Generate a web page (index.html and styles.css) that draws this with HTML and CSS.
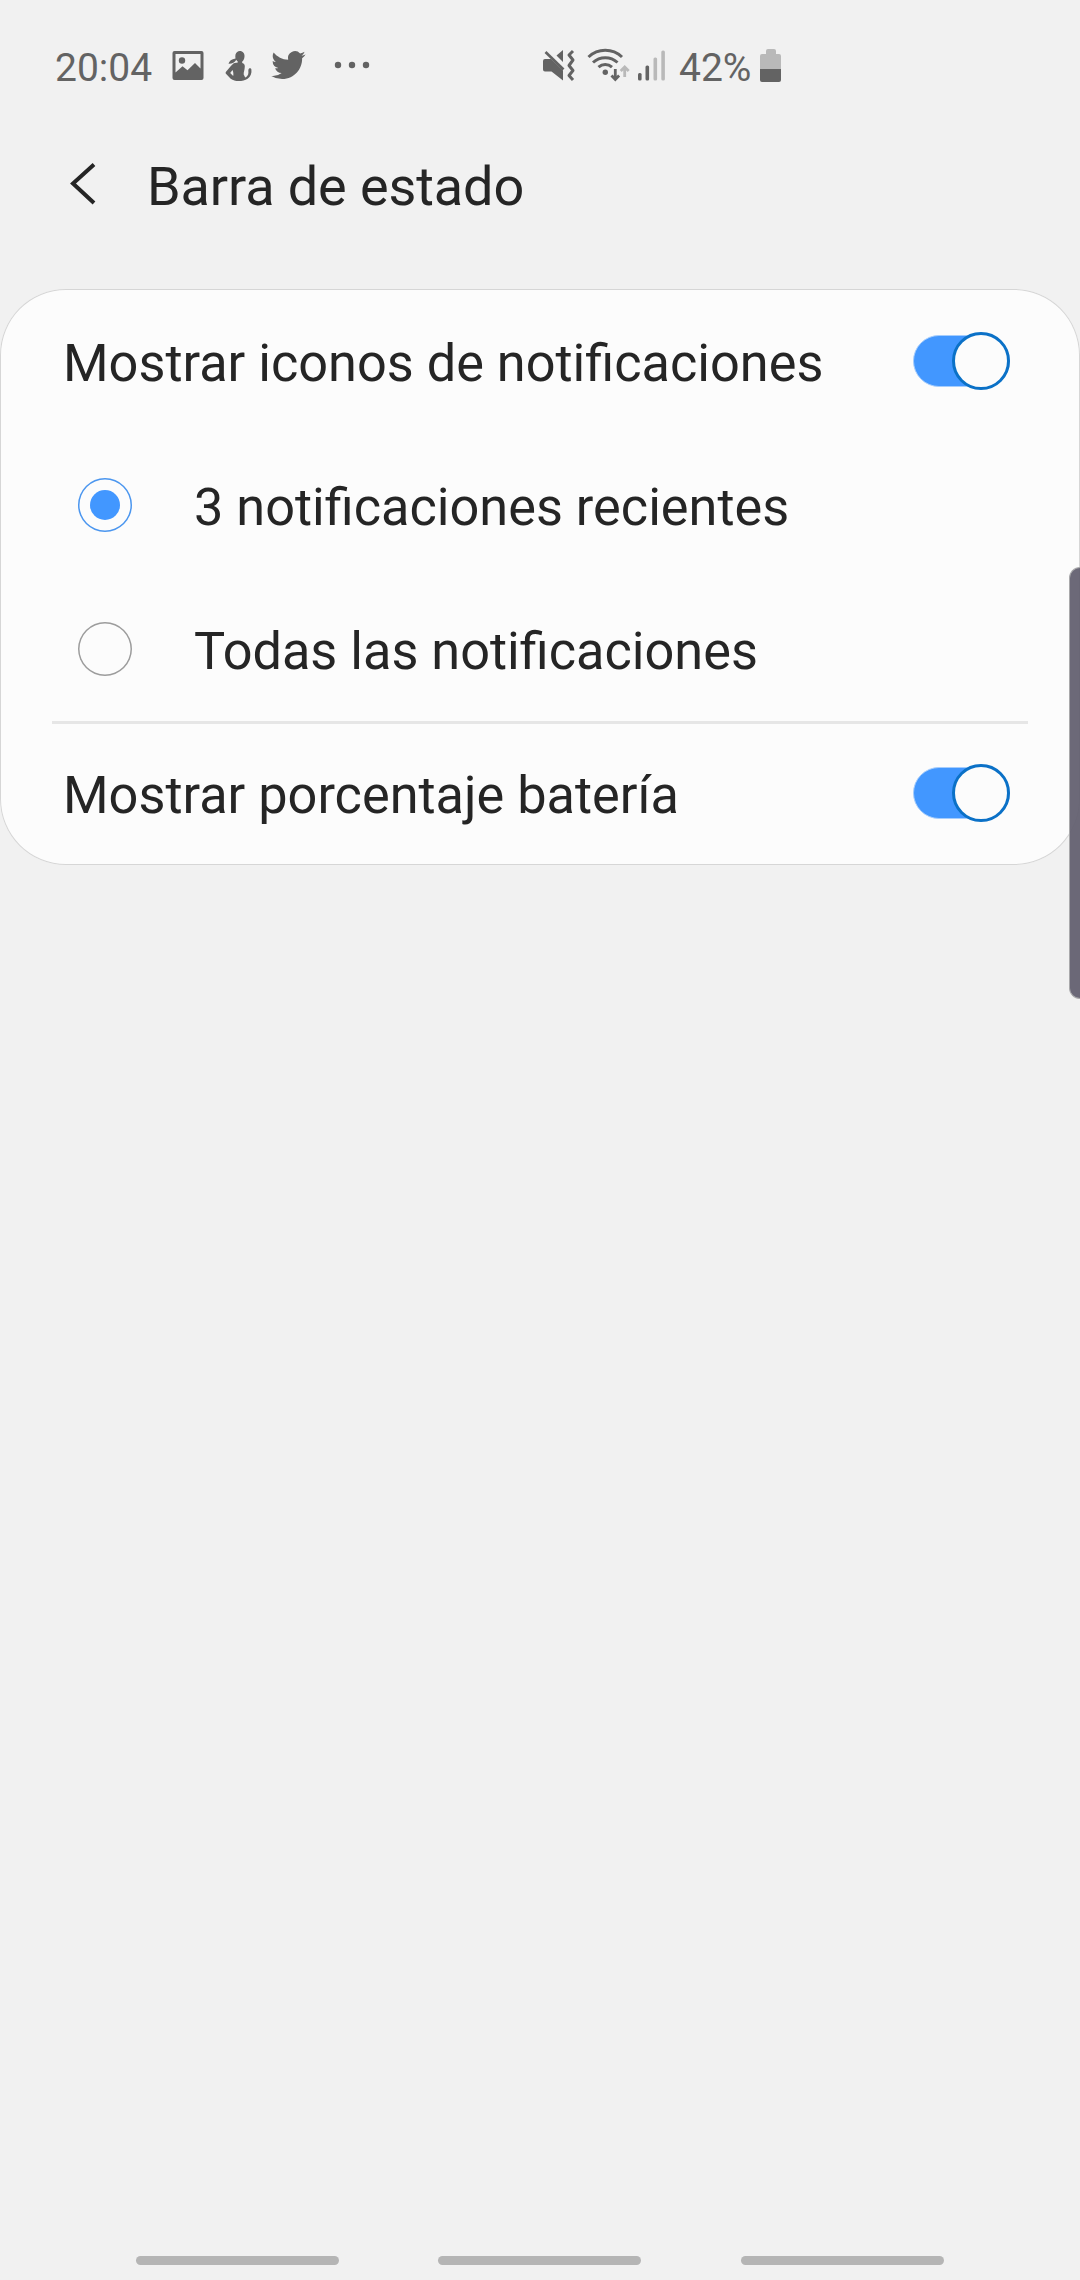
FILE: index.html
```html
<!DOCTYPE html>
<html lang="es">
<head>
<meta charset="utf-8">
<title>Barra de estado</title>
<link rel="stylesheet" href="styles.css">
</head>
<body>
<div class="screen">
  <header class="status">
    <span class="clock">20:04</span>
    <svg class="icon" width="40" height="40" viewBox="168 45 40 40">
      <path fill-rule="evenodd" d="M174.500 51h27a2 2 0 0 1 2 2v25a2 2 0 0 1-2 2h-27a2 2 0 0 1-2-2V53a2 2 0 0 1 2-2zM175.500 54v18.500l7-6.200 5 4 7.500-7.300 5.500 5.500V54z"/>
      <circle cx="182" cy="60.500" r="3.200"/>
    </svg>
    <svg class="icon" width="48" height="40" viewBox="216 45 48 40">
      <path d="M235.500 54.500c.8-2.300 2.300-3.500 4.200-3.500 3.300 0 5.100 2.600 4.800 5.600-.2 2.400-.9 4-2.400 5.200l.2 1.200c1.700.4 2.600 1.600 2.500 3.400-.1 3.600-1.300 5.600-1.100 8.200l1.500 3c2-1 3.200-2.600 3.200-5 0-1.500-.3-3 .5-3.900.8-.8 2.300-.4 2.500.8.500 3.800-.8 7.400-3.800 9.200-2.400 1.500-5.500 2.300-8.900 2.300-3.300 0-5.600-.7-8-2.300l-4.500-4.600c-.8-.9-.8-1.700 0-2.600 2-2.600 4.300-5.400 6.700-7.600 1.100-1 2.600-.9 4.600-1.100l.3-1.300c-.7-.5-1.200-1-1.500-1.700-1.600 2.700-4.300 4.200-7.800 4 .6-2.700 3.100-4.900 7-5.400-.2-1.300-.3-2.600 0-3.900zM232.500 70l-2.300 2.900 3 3.100c.4-2 .2-4-.7-6z"/>
    </svg>
    <svg class="icon" width="48" height="40" viewBox="264 45 48 40">
      <path transform="translate(271.300 48) scale(1.430)" d="M23.953 4.570a10 10 0 0 1-2.825.775 4.958 4.958 0 0 0 2.163-2.723c-.951.555-2.005.959-3.127 1.184a4.920 4.920 0 0 0-8.384 4.482C7.690 8.095 4.067 6.130 1.640 3.162a4.822 4.822 0 0 0-.666 2.475c0 1.710.870 3.213 2.188 4.096a4.904 4.904 0 0 1-2.228-.616v.060a4.923 4.923 0 0 0 3.946 4.827 4.996 4.996 0 0 1-2.212.085 4.936 4.936 0 0 0 4.604 3.417 9.867 9.867 0 0 1-6.102 2.105c-.390 0-.779-.023-1.170-.067a13.995 13.995 0 0 0 7.557 2.209c9.053 0 13.998-7.496 13.998-13.985 0-.210 0-.420-.015-.630A9.935 9.935 0 0 0 24 4.590z"/>
    </svg>
    <svg class="icon" width="64" height="40" viewBox="320 45 64 40">
      <circle cx="338" cy="65" r="3.200"/><circle cx="352" cy="65" r="3.200"/><circle cx="366" cy="65" r="3.200"/>
    </svg>
    <div class="system">
      <svg class="icon" width="40" height="40" viewBox="540 45 40 40">
        <path d="M545 59h6l12 11.500V80.500L551.500 71.500H545a2 2 0 0 1-2-2V61a2 2 0 0 1 2-2zM556.500 55.500l6.500-5.500v12z"/>
        <path class="line" stroke-width="2.700" d="M545.500 52l18 17.500"/>
        <path class="line" stroke-width="3" stroke-linejoin="round" d="M573 51l-4 4 4 5-4 5.500 4 5-4 5 4 4.500"/>
      </svg>
      <svg class="icon" width="50" height="40" viewBox="584 45 50 40">
        <g class="line" stroke-width="3">
          <path d="M588.500 57c9.500-9 24-9 33.500 0M593 62.500c7-6.500 17.500-6.500 24.500 0M598.500 67.200c4-3.600 9.500-3.600 13.500 0"/>
        </g>
        <circle cx="605.300" cy="72.300" r="2.700"/>
        <path class="line" stroke-width="2.800" d="M615.300 69v10M611.500 75.500l3.800 4 3.800-4"/>
        <path class="line faint" stroke-width="2.800" d="M624.700 77V67.500M620.700 71l4-4 4 4"/>
      </svg>
      <svg class="icon" width="36" height="40" viewBox="634 45 36 40">
        <rect x="638" y="73" width="3.600" height="7.500" rx="1.500"/>
        <rect x="645.500" y="65.500" width="3.600" height="15" rx="1.500"/>
        <rect class="pale" x="653.500" y="57.500" width="3.600" height="23" rx="1.500"/>
        <rect class="pale" x="661.300" y="50.500" width="3.600" height="30" rx="1.500"/>
      </svg>
      <span class="percent">42%</span>
      <svg class="icon" width="30" height="40" viewBox="756 45 30 40">
        <path class="pale" d="M760 69V56a2 2 0 0 1 2-2h4v-3a2 2 0 0 1 2-2h6a2 2 0 0 1 2 2v3h3a2 2 0 0 1 2 2v13z"/>
        <path d="M760 69h21v11a2 2 0 0 1-2 2h-17a2 2 0 0 1-2-2z"/>
      </svg>
    </div>
  </header>

  <div class="appbar">
    <svg class="back" width="32" height="48" viewBox="66 160 32 48"><path d="M94 164.500L73 183.500L94 203"/></svg>
    <h1 class="title">Barra de estado</h1>
  </div>

  <main class="card">
    <div class="row">
      <span class="label">Mostrar iconos de notificaciones</span>
      <span class="switch"><span class="knob"></span></span>
    </div>
    <div class="row option">
      <span class="radio checked"></span>
      <span class="label">3 notificaciones recientes</span>
    </div>
    <div class="row option">
      <span class="radio"></span>
      <span class="label">Todas las notificaciones</span>
    </div>
    <div class="row divided">
      <span class="label">Mostrar porcentaje batería</span>
      <span class="switch"><span class="knob"></span></span>
    </div>
  </main>

  <nav class="gestures"><span></span><span></span><span></span></nav>
  <div class="edge-handle"></div>
</div>
</body>
</html>
```

FILE: styles.css
```css
* { box-sizing: border-box; }
body { margin: 0; background: #f1f1f1; }

.screen {
  position: relative;
  display: flex;
  flex-direction: column;
  width: 1080px;
  height: 2280px;
  overflow: hidden;
  background: #f1f1f1;
  color: #252525;
  font-family: Roboto, "Liberation Sans", sans-serif;
}

.status {
  display: flex;
  height: 130px;
  padding: 45px 0 0 55px;
  color: #636363;
  font-size: 39px;
  line-height: 47px;
}
.clock { width: 113px; }
.icon { flex: none; fill: #636363; }
.icon + .icon { margin-left: 8px; }
.status > .icon:nth-of-type(3) { margin-left: 0; }
.line { fill: none; stroke: #636363; }
.faint { stroke: #b9b9b9; }
.pale { fill: #b9b9b9; }
.system { display: flex; margin-left: 156px; }
.system .icon + .icon { margin-left: 4px; }
.system .icon:nth-of-type(3) { margin-left: 0; }
.percent { width: 77px; margin-left: 9px; }

.appbar {
  display: flex;
  align-items: center;
  height: 108px;
  padding-left: 66px;
}
.back { fill: none; stroke: #252525; stroke-width: 4; }
.title {
  margin: 6px 0 0 49px;
  font-size: 54px;
  font-weight: 400;
  line-height: 64px;
  letter-spacing: -.1px;
  white-space: nowrap;
}

.card {
  margin-top: 51px;
  height: 576px;
  border-radius: 66px;
  background: #fcfcfc;
  box-shadow: inset 0 0 0 1px #d6d6d6;
}
.row {
  display: flex;
  align-items: center;
  justify-content: space-between;
  height: 144px;
  padding: 0 70px 0 63px;
  font-size: 52.250px;
}
.label { padding-top: 5px; line-height: 61px; white-space: nowrap; }
.option { justify-content: flex-start; gap: 62px; padding-left: 78px; }
.divided {
  background: linear-gradient(#e6e6e6, #e6e6e6) 52px 0 / 976px 3px no-repeat;
}

.switch {
  display: flex;
  align-items: center;
  justify-content: flex-end;
  width: 97px;
  height: 52px;
  border: 1px solid #a5cdfd;
  border-radius: 26px;
  background: #4297ff;
}
.knob {
  flex: none;
  width: 58px;
  height: 58px;
  margin-right: -1px;
  border: 3px solid #0b71c7;
  border-radius: 50%;
  background: #fcfcfc;
}
.radio {
  flex: none;
  width: 54px;
  height: 54px;
  border-radius: 50%;
  box-shadow: inset 0 0 0 1.500px #9c9c9c;
}
.checked {
  display: grid;
  place-items: center;
  box-shadow: inset 0 0 0 1.500px #4b96ef;
}
.checked::after {
  content: "";
  width: 30px;
  height: 30px;
  border-radius: 50%;
  background: #4297ff;
}

.gestures {
  display: flex;
  gap: 99.300px;
  margin: auto 0 15px;
  padding-left: 136px;
}
.gestures span {
  width: 203px;
  height: 9px;
  border-radius: 5px;
  background: #b5b5b5;
}

.edge-handle {
  position: absolute;
  right: 0;
  top: 567px;
  width: 11px;
  height: 432px;
  border: 1px solid #a9a9ab;
  border-right: 0;
  border-radius: 14px 0 0 14px;
  background: rgba(97, 94, 110, .93);
}
```
